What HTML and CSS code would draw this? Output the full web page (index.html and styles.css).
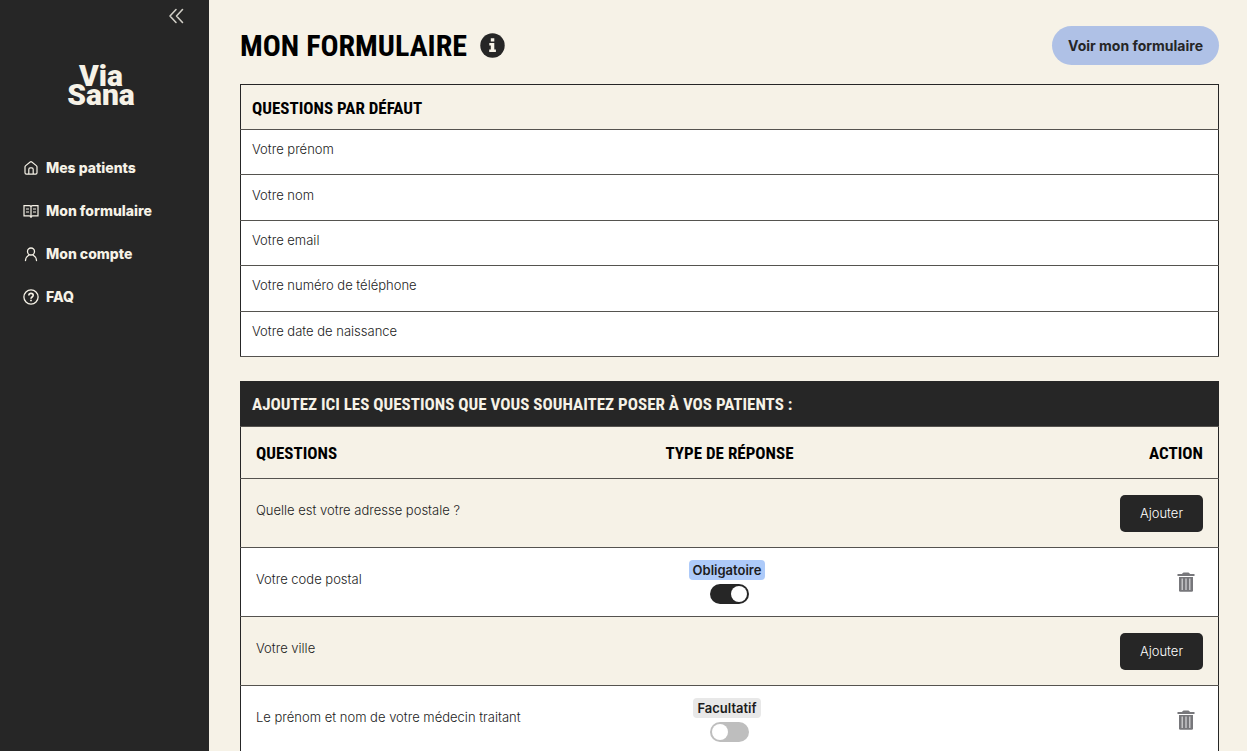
FILE: index.html
```html
<!DOCTYPE html>
<html lang="fr">
<head>
  <meta charset="UTF-8">
  <meta name="viewport" content="width=device-width, initial-scale=1.0">
  <title>Via Sana - Mon formulaire</title>
  <link rel="stylesheet" href="styles.css">
</head>
<body>
  <div class="layout">
    <aside class="sidebar">
      <button class="collapse-button" type="button" aria-label="Réduire le menu">
        <svg width="16" height="16" viewBox="0 0 16 16" fill="none" stroke="currentColor" stroke-width="1.6" stroke-linecap="round" stroke-linejoin="round">
          <path d="M8 1.500L2 8l6 6.500M14.500 1.500L8.500 8l6 6.500"/>
        </svg>
      </button>
      <a class="logo" href="#"><span>Via</span><span>Sana</span></a>
      <nav class="menu">
        <a href="#patients">
          <svg viewBox="0 0 16 16" fill="none" stroke="currentColor" stroke-width="1.200" stroke-linejoin="round">
            <path d="M2 7c0-.6.2-1 .7-1.400L7.200 2a1.300 1.300 0 0 1 1.600 0l4.500 3.600c.5.4.7.8.7 1.400v5.800c0 .9-.5 1.400-1.400 1.400H3.400c-.9 0-1.400-.5-1.400-1.400z"/>
            <path d="M5.800 14V9.500c0-1 .6-1.600 1.400-1.600h1.600c.8 0 1.400.6 1.400 1.600V14"/>
          </svg>
          Mes patients
        </a>
        <a href="#formulaire">
          <svg viewBox="0 0 16 16" fill="none" stroke="currentColor" stroke-width="1.200">
            <path d="M8 3.500C7.500 2.900 7 2.600 6.200 2.600H1v10.200h5.200c.8 0 1.400.3 1.800.9.400-.6 1-.9 1.800-.9H15V2.600H9.800C9 2.600 8.500 2.900 8 3.500zM8 3.500V15"/>
            <path d="M3 6h3M3 9h3M10 6h3M10 9h3"/>
          </svg>
          Mon formulaire
        </a>
        <a href="#compte">
          <svg viewBox="0 0 16 16" fill="none" stroke="currentColor" stroke-width="1.300" stroke-linecap="round">
            <circle cx="8" cy="5.500" r="3.500"/>
            <path d="M2.500 14.500c.2-2.600 1.400-4.300 3.500-5.500M13.500 14.500c-.2-2.600-1.400-4.300-3.500-5.500"/>
          </svg>
          Mon compte
        </a>
        <a href="#faq">
          <svg viewBox="0 0 16 16" fill="none" stroke="currentColor" stroke-width="1.300">
            <circle cx="8" cy="8" r="7.100"/>
            <path d="M5.800 6.500c.1-1.300 1-2.100 2.200-2.100 1.300 0 2.200.8 2.200 1.900 0 1.700-2.200 1.700-2.200 3.400" stroke-width="1.600"/>
            <path d="M8 10.700v1.600" stroke-width="1.700"/>
          </svg>
          FAQ
        </a>
      </nav>
    </aside>

    <main class="content">
      <header class="page-header">
        <h1>Mon formulaire</h1>
        <button class="info-button" type="button" aria-label="Informations">
          <svg width="25" height="25" viewBox="0 0 25 25">
            <circle cx="12.500" cy="12.500" r="12.200" fill="#262626"/>
            <path d="M10.800 5.200h3.500v3.300h-3.500zM9.300 10h5v6.600h1.600v2.500H9.200v-2.500h1.600v-4.100H9.300z" fill="#f6f2e7"/>
          </svg>
        </button>
        <a class="view-button" href="#apercu">Voir mon formulaire</a>
      </header>

      <table class="default-questions">
        <thead>
          <tr><th>Questions par défaut</th></tr>
        </thead>
        <tbody>
          <tr><td>Votre prénom</td></tr>
          <tr><td>Votre nom</td></tr>
          <tr><td>Votre email</td></tr>
          <tr><td>Votre numéro de téléphone</td></tr>
          <tr><td>Votre date de naissance</td></tr>
        </tbody>
      </table>

      <table class="custom-questions">
        <thead>
          <tr class="title-row">
            <th colspan="3">Ajoutez ici les questions que vous souhaitez poser à vos patients :</th>
          </tr>
          <tr class="columns-row">
            <th>Questions</th>
            <th>Type de réponse</th>
            <th>Action</th>
          </tr>
        </thead>
        <tbody>
          <tr>
            <td>Quelle est votre adresse postale ?</td>
            <td></td>
            <td><button class="add-button" type="button">Ajouter</button></td>
          </tr>
          <tr class="added">
            <td>Votre code postal</td>
            <td>
              <div class="answer-type">
                <label class="badge required" for="type-code-postal">Obligatoire</label>
                <input class="toggle" type="checkbox" id="type-code-postal" checked>
              </div>
            </td>
            <td>
              <button class="delete-button" type="button" aria-label="Supprimer">
                <svg width="18" height="20" viewBox="0 0 18 20">
                  <path d="M.5 2h4.300L6.500.4h5L13.200 2h4.300v2H.5z" fill="#77777b"/>
                  <path d="M2 5h14v13.500q0 1.300-1.300 1.300H3.300Q2 19.800 2 18.500z" fill="#77777b"/>
                  <path d="M5.200 6.500v11.500M9 6.500v11.500M12.800 6.500v11.500" stroke="#d8d8da" stroke-width="1.200"/>
                </svg>
              </button>
            </td>
          </tr>
          <tr>
            <td>Votre ville</td>
            <td></td>
            <td><button class="add-button" type="button">Ajouter</button></td>
          </tr>
          <tr class="added">
            <td>Le prénom et nom de votre médecin traitant</td>
            <td>
              <div class="answer-type">
                <label class="badge" for="type-medecin">Facultatif</label>
                <input class="toggle" type="checkbox" id="type-medecin">
              </div>
            </td>
            <td>
              <button class="delete-button" type="button" aria-label="Supprimer">
                <svg width="18" height="20" viewBox="0 0 18 20">
                  <path d="M.5 2h4.300L6.500.4h5L13.200 2h4.300v2H.5z" fill="#77777b"/>
                  <path d="M2 5h14v13.500q0 1.300-1.300 1.300H3.300Q2 19.800 2 18.500z" fill="#77777b"/>
                  <path d="M5.200 6.500v11.500M9 6.500v11.500M12.800 6.500v11.500" stroke="#d8d8da" stroke-width="1.200"/>
                </svg>
              </button>
            </td>
          </tr>
        </tbody>
      </table>
    </main>
  </div>
</body>
</html>
```

FILE: styles.css
```css
* {
  box-sizing: border-box;
}
body {
  font-family: Inter, "Liberation Sans", sans-serif;
  font-size: 13px;
  background-color: #f6f2e7;
  color: #1c1c1c;
  margin: 0;
}
button {
  font-family: inherit;
  border: none;
  background: none;
  padding: 0;
  cursor: pointer;
}
a {
  text-decoration: none;
}
svg {
  display: block;
}
.layout {
  display: flex;
  height: 100vh;
}

/* Sidebar */
.sidebar {
  display: flex;
  flex-direction: column;
  flex: 0 0 209px;
  background-color: #262626;
  color: #f6f2e7;
}
.collapse-button {
  align-self: flex-end;
  margin: 8px 25px 0 0;
  color: #cfcdc5;
}
.logo {
  display: flex;
  flex-direction: column;
  align-items: center;
  margin: 42px 7px 0 0;
  font-family: Roboto, sans-serif;
  font-size: 30px;
  font-weight: 900;
  line-height: 19px;
  color: #f6f2e7;
}
.menu {
  display: flex;
  flex-direction: column;
  gap: 23px;
  padding: 54px 23px 0;
}
.menu a {
  display: flex;
  align-items: center;
  gap: 7px;
  font-size: 14px;
  font-weight: 800;
  line-height: 20px;
  color: #f6f2e7;
}
.menu svg {
  width: 16px;
  height: 16px;
}

/* Page content */
.content {
  flex: 1;
  min-width: 0;
  padding: 26px 28px 26px 31px;
  overflow-y: auto;
  scrollbar-width: none;
}
.page-header {
  display: flex;
  align-items: center;
  margin-bottom: 19px;
}
h1, th {
  font-family: "Roboto Condensed", "Liberation Sans Narrow", sans-serif;
  font-weight: 700;
  text-transform: uppercase;
  color: #000;
}
h1 {
  margin: 0;
  font-size: 30px;
  line-height: 39px;
}
.info-button {
  margin-left: 13px;
}
.view-button {
  margin-left: auto;
  padding: 0 16px;
  border-radius: 20px;
  background-color: #afc1e6;
  font-size: 14px;
  font-weight: 700;
  line-height: 39px;
  color: #262626;
}

/* Tables */
table {
  width: 100%;
  border-collapse: collapse;
  border: 1px solid #262626;
}
tr {
  border-bottom: 1px solid #55534f;
}
th {
  font-size: 17px;
  line-height: 20px;
  text-align: left;
}
td {
  font-weight: 300;
  line-height: 20px;
}
.default-questions {
  height: 273px;
  margin-bottom: 24px;
}
.default-questions th {
  height: 45px;
  padding: 2px 11px 0;
}
.default-questions td {
  height: 45px;
  padding: 0 11px 6px;
  background-color: #fff;
}
.custom-questions {
  table-layout: fixed;
}
.title-row th {
  height: 45px;
  padding: 0 11px;
  background-color: #262626;
  color: #f6f2e7;
}
.columns-row th {
  height: 52px;
  padding: 0 15px;
}
.columns-row th:nth-child(2) {
  text-align: center;
}
.columns-row th:last-child {
  text-align: right;
}
.custom-questions td {
  height: 69px;
  padding: 0 15px;
}
.custom-questions td:first-child {
  padding-bottom: 6px;
}
.added {
  background-color: #fff;
}
.add-button {
  display: block;
  width: 83px;
  height: 37px;
  margin-left: auto;
  border-radius: 5px;
  background-color: #262626;
  font-size: 13px;
  font-weight: 300;
  color: #fff;
}
.delete-button {
  display: block;
  margin: 0 8px 0 auto;
}
.answer-type {
  display: flex;
  flex-direction: column;
  align-items: center;
  gap: 4px;
}
.badge {
  margin-right: 5px;
  padding: 0 4px;
  border-radius: 4px;
  background-color: #e8e8e8;
  font-weight: 600;
  line-height: 20px;
}
.badge.required {
  background-color: #adcaf9;
}
.toggle {
  appearance: none;
  width: 39px;
  height: 20px;
  margin: 0;
  padding: 2px;
  border-radius: 10px;
  background-color: #bebebe;
  cursor: pointer;
}
.toggle::before {
  content: "";
  display: block;
  width: 16px;
  height: 16px;
  border-radius: 50%;
  background-color: #fff;
}
.toggle:checked {
  background-color: #262626;
}
.toggle:checked::before {
  margin-left: auto;
}
```
